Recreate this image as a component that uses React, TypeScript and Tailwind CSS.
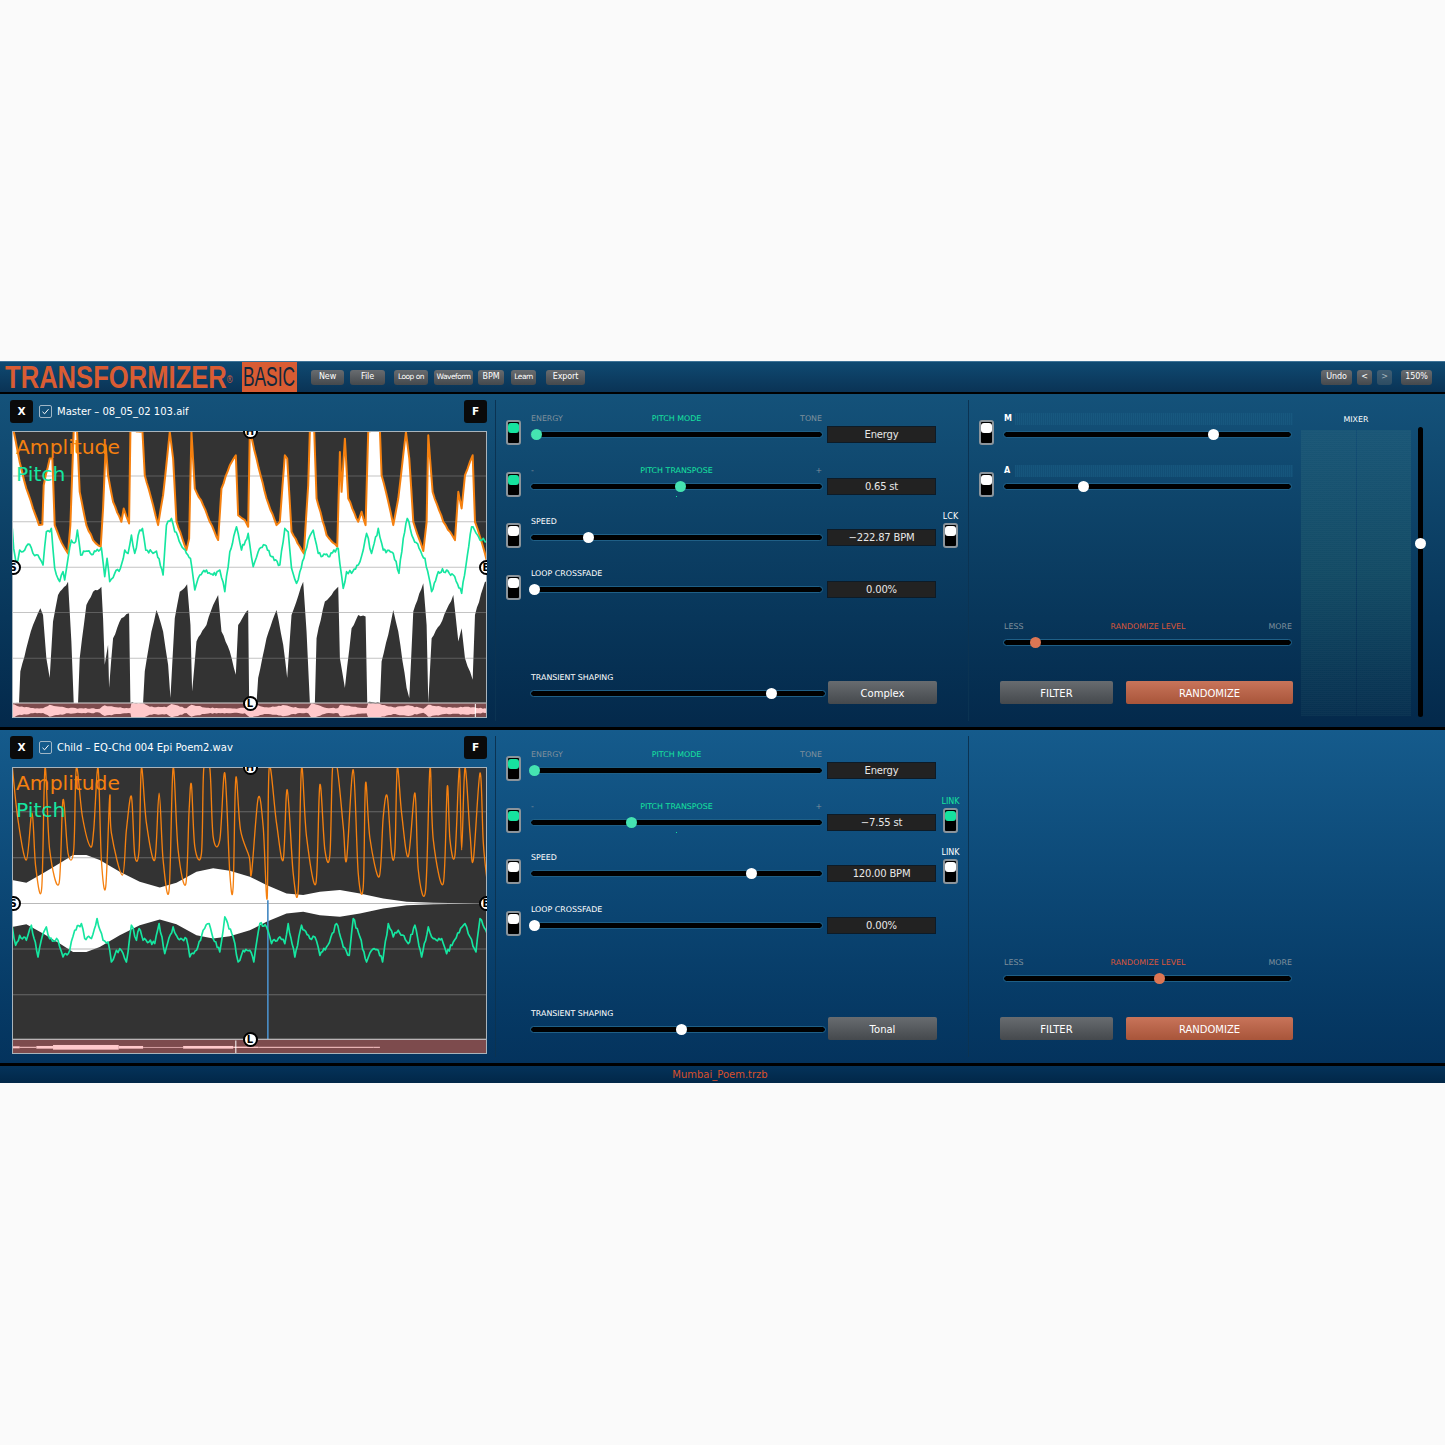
import type { ReactNode } from "react";

type Pt = [number, number];

const toStr = (pts: Pt[]) => pts.map((p) => p.join(",")).join(" ");

// seeded wobble so the traced lines look like real data
function wobble(pts: Pt[], amount: number, step = 5) {
  const out: Pt[] = [];
  let s = 7;
  for (let i = 0; i < pts.length - 1; i++) {
    const [x0, y0] = pts[i];
    const [x1, y1] = pts[i + 1];
    const steps = Math.max(1, Math.floor((x1 - x0) / step));
    for (let k = 0; k < steps; k++) {
      s = (s * 73 + 41) % 1009;
      const t = k / steps;
      const n = k === 0 ? 0 : (s / 1009 - 0.5) * amount;
      out.push([x0 + (x1 - x0) * t, y0 + (y1 - y0) * t + n]);
    }
  }
  out.push(pts[pts.length - 1]);
  return out;
}

// catmull-rom through the points, for the rounded peaks of the child amplitude
function spline(pts: Pt[]) {
  let d = `M${pts[0][0]} ${pts[0][1]}`;
  for (let i = 0; i < pts.length - 1; i++) {
    const p0 = pts[Math.max(0, i - 1)];
    const p1 = pts[i];
    const p2 = pts[i + 1];
    const p3 = pts[Math.min(pts.length - 1, i + 2)];
    d += ` C${p1[0] + (p2[0] - p0[0]) / 6} ${p1[1] + (p2[1] - p0[1]) / 6} ${p2[0] - (p3[0] - p1[0]) / 6} ${p2[1] - (p3[1] - p1[1]) / 6} ${p2[0]} ${p2[1]}`;
  }
  return d;
}

const upperA: Pt[] = wobble([[37,17],[42,17],[60,110],[80,190],[100,250],[118,300],[128,298],[132,180],[150,100],[158,100],[165,300],[180,340],[205,385],[212,300],[222,17],[232,17],[240,200],[260,300],[280,345],[303,365],[310,250],[318,60],[325,150],[340,230],[365,290],[372,250],[388,295],[392,17],[428,17],[435,150],[460,240],[475,300],[490,210],[510,20],[520,100],[530,290],[560,375],[568,340],[575,20],[585,190],[610,240],[630,290],[655,345],[665,190],[690,120],[708,90],[715,270],[735,285],[745,305],[750,17],[770,100],[800,220],[830,300],[840,290],[855,90],[862,100],[875,320],[912,385],[925,180],[930,17],[943,17],[950,220],[980,330],[1012,365],[1020,80],[1025,200],[1035,40],[1045,220],[1075,290],[1085,260],[1097,300],[1105,17],[1140,17],[1145,150],[1165,230],[1180,300],[1195,220],[1218,20],[1228,100],[1240,290],[1270,378],[1280,290],[1285,30],[1298,200],[1330,290],[1365,345],[1375,200],[1385,250],[1395,150],[1418,90],[1425,290],[1440,335],[1461,410]], 6, 6);
const lowerA: Pt[] = wobble([[37,835],[58,835],[62,740],[80,670],[100,600],[122,550],[130,570],[140,700],[150,760],[160,590],[175,510],[205,470],[215,650],[222,835],[235,835],[240,700],[260,540],[280,500],[305,485],[310,580],[315,720],[325,660],[328,790],[340,640],[365,580],[388,565],[392,835],[430,835],[435,740],[455,620],[470,555],[490,620],[505,720],[512,820],[525,580],[540,500],[562,478],[572,600],[577,800],[590,650],[620,600],[640,540],[655,510],[665,620],[690,680],[708,750],[715,600],[745,555],[748,835],[770,835],[775,760],[800,640],[830,555],[850,660],[862,760],[875,570],[910,470],[920,620],[930,835],[945,835],[950,640],[975,530],[1015,485],[1020,700],[1035,790],[1055,610],[1075,570],[1097,575],[1102,835],[1140,835],[1145,710],[1165,630],[1180,555],[1195,620],[1220,790],[1228,820],[1240,560],[1270,475],[1280,600],[1285,835],[1295,640],[1320,600],[1360,510],[1375,650],[1385,610],[1395,700],[1418,765],[1425,570],[1455,470],[1461,470]], 8, 6);
const pitchA: Pt[] = [[38,310],[42,370],[50,420],[60,375],[75,375],[90,358],[100,385],[115,390],[130,420],[140,320],[155,310],[165,430],[180,470],[190,440],[195,465],[205,400],[215,345],[228,350],[233,315],[243,390],[260,378],[280,388],[305,368],[315,455],[322,400],[330,470],[345,445],[362,430],[375,375],[385,385],[395,330],[405,385],[420,315],[428,310],[438,375],[460,385],[470,378],[490,450],[500,300],[515,280],[525,320],[560,385],[572,400],[585,495],[600,450],[620,435],[640,450],[660,435],[675,500],[690,380],[710,305],[725,375],[745,325],[760,425],[775,380],[795,360],[815,395],[840,420],[855,310],[865,320],[875,430],[890,475],[900,440],[912,400],[925,345],[940,315],[955,385],[985,395],[1015,370],[1030,490],[1040,440],[1055,445],[1075,420],[1090,375],[1100,325],[1115,385],[1135,310],[1150,375],[1180,385],[1197,445],[1210,340],[1222,280],[1240,340],[1275,400],[1295,500],[1315,440],[1340,435],[1360,450],[1385,505],[1415,305],[1440,345],[1450,340],[1461,350]];
const miniA: Pt[] = wobble([[37,20],[60,12],[100,8],[130,7],[150,18],[200,8],[240,7],[300,6],[315,16],[350,10],[392,8],[395,22],[430,22],[450,12],[500,10],[515,20],[560,7],[575,18],[620,9],[680,7],[735,8],[750,20],[800,10],[855,16],[900,7],[925,8],[935,22],[980,8],[1015,8],[1020,17],[1060,12],[1100,8],[1105,22],[1140,20],[1180,10],[1225,16],[1270,6],[1285,18],[1340,9],[1400,12],[1430,8],[1461,6]], 3, 6);

const orangeB: Pt[] = [[38,22],[55,180],[80,300],[97,160],[108,320],[126,385],[136,25],[150,270],[178,370],[190,120],[205,280],[222,270],[230,25],[248,170],[272,260],[282,210],[295,25],[305,300],[318,380],[330,110],[335,220],[368,345],[380,210],[395,110],[405,285],[418,270],[425,25],[440,190],[465,300],[478,100],[490,300],[508,390],[520,25],[535,270],[558,372],[568,150],[575,75],[585,260],[605,280],[612,25],[630,25],[640,230],[660,240],[675,40],[690,340],[700,380],[708,55],[722,210],[748,290],[755,340],[775,115],[790,200],[802,415],[808,25],[830,190],[850,300],[862,90],[880,340],[895,390],[905,25],[920,230],[948,370],[960,75],[975,270],[990,285],[998,25],[1012,25],[1030,200],[1040,300],[1060,30],[1075,340],[1090,380],[1097,70],[1110,235],[1138,350],[1150,170],[1162,110],[1175,280],[1185,270],[1192,25],[1205,160],[1225,290],[1245,100],[1255,330],[1277,390],[1290,25],[1300,240],[1330,370],[1342,80],[1350,240],[1365,285],[1378,25],[1385,270],[1395,25],[1410,220],[1420,300],[1440,40],[1450,250],[1461,360]];
const envB: Pt[] = [[37,360],[80,368],[130,340],[180,310],[220,285],[260,285],[300,300],[360,335],[420,365],[480,382],[530,368],[590,335],[640,325],[690,332],[750,350],[800,375],[860,400],[910,405],[960,395],[1020,390],[1080,400],[1150,415],[1220,425],[1300,428],[1440,430]];
const pitchB: Pt[] = [[38,500],[48,555],[60,525],[80,540],[95,495],[115,590],[130,520],[140,500],[150,535],[175,540],[190,590],[210,570],[225,510],[245,490],[255,535],[275,535],[292,475],[310,540],[325,545],[335,605],[350,570],[365,570],[380,605],[395,495],[410,540],[418,505],[430,540],[465,550],[478,490],[495,580],[520,500],[535,535],[560,535],[570,590],[590,570],[610,510],[628,490],[640,535],[660,575],[675,470],[700,530],[715,605],[730,570],[750,570],[762,605],[780,490],[800,500],[815,550],[840,530],[855,550],[865,490],[885,590],[905,495],[930,535],[945,530],[960,585],[980,560],[1010,490],[1030,560],[1048,585],[1060,475],[1080,530],[1100,605],[1115,570],[1135,570],[1148,605],[1165,490],[1180,530],[1195,510],[1225,550],[1245,495],[1265,590],[1285,500],[1300,535],[1325,535],[1340,580],[1360,545],[1395,490],[1410,530],[1428,575],[1440,475],[1461,520]];
const barsB = [[37,60,6],[60,110,3],[110,160,8],[160,357,14],[357,430,8],[430,550,2],[550,700,8],[700,775,4],[775,1120,3],[1120,1140,3]];

function MasterWave() {
  const mini = [...miniA.map(([x, h]): Pt => [x, 858 - h]), ...[...miniA].reverse().map(([x, h]): Pt => [x, 858 + h])];
  return (
    <svg width="475" height="287" viewBox="37 17 1424 863" preserveAspectRatio="none" className="block">
      <rect x="37" y="17" width="1424" height="818" fill="#333333" />
      <polygon points={toStr([...upperA, ...[...lowerA].reverse()])} fill="#ffffff" />
      {[152, 290, 427, 563, 700].map((y) => (
        <line key={y} x1="37" x2="1461" y1={y} y2={y} stroke="#8a8a8a" strokeOpacity="0.5" strokeWidth="3" />
      ))}
      <polyline points={toStr(upperA)} fill="none" stroke="#f5800f" strokeWidth="6" strokeLinejoin="round" />
      <polyline points={toStr(wobble(pitchA, 14, 4))} fill="none" stroke="#15e6a0" strokeWidth="5" strokeLinejoin="round" />
      <rect x="37" y="835" width="1424" height="45" fill="#7d4b4d" />
      <polygon points={toStr(mini)} fill="#ffc9cb" />
      <line x1="1426" x2="1426" y1="838" y2="880" stroke="#ffffff" strokeWidth="3" />
      <line x1="37" x2="1461" y1="835" y2="835" stroke="#d8d8d8" strokeWidth="3" />
    </svg>
  );
}

function ChildWave() {
  const env = [...envB, ...[...envB].reverse().map(([x, y]): Pt => [x, 860 - y])];
  return (
    <svg width="475" height="287" viewBox="37 22 1424 858" preserveAspectRatio="none" className="block">
      <rect x="37" y="22" width="1424" height="814" fill="#333333" />
      <polygon points={toStr(env)} fill="#ffffff" />
      {[156, 293, 430, 566, 703].map((y) => (
        <line key={y} x1="37" x2="1461" y1={y} y2={y} stroke="#8a8a8a" strokeOpacity="0.6" strokeWidth="3" />
      ))}
      <line x1="804" x2="804" y1="420" y2="836" stroke="#4a8cc4" strokeWidth="5" />
      <path d={spline(orangeB)} fill="none" stroke="#f5800f" strokeWidth="4" strokeLinejoin="round" />
      <polyline points={toStr(wobble(pitchB, 14, 4))} fill="none" stroke="#15e6a0" strokeWidth="5" strokeLinejoin="round" />
      <rect x="37" y="836" width="1424" height="44" fill="#7d4b4d" />
      {barsB.map(([a, b, h]) => (
        <rect key={a} x={a} y={860 - h / 2} width={b - a} height={h} fill="#ffc9cb" />
      ))}
      <line x1="708" x2="708" y1="840" y2="880" stroke="#ffffff" strokeWidth="3" />
      <line x1="37" x2="1461" y1="836" y2="836" stroke="#d8d8d8" strokeWidth="3" />
    </svg>
  );
}

function Handle({ label, className }: { label: string; className: string }) {
  return (
    <div className={`absolute flex h-[15px] w-[15px] items-center justify-center rounded-full border-2 border-black bg-white text-[10px] font-bold text-black ${className}`}>
      {label}
    </div>
  );
}

function Plot({ children }: { children: ReactNode }) {
  return (
    <div className="relative ml-[12px] mt-[8px] h-[287px] w-[475px] overflow-hidden outline outline-1 -outline-offset-1 outline-[#a9b4bc]">
      {children}
      <div className="absolute left-[4px] top-[3px] text-[20.3px] leading-[26px] text-[#f5800f]">Amplitude</div>
      <div className="absolute left-[4px] top-[30px] text-[20.3px] leading-[26px] text-[#15e6a0]">Pitch</div>
      <Handle label="H" className="left-[230.5px] top-[-7.5px]" />
      <Handle label="S" className="left-[-6.5px] top-[128.5px]" />
      <Handle label="E" className="left-[466.5px] top-[128.5px]" />
      <Handle label="L" className="left-[230.5px] top-[264.5px]" />
    </div>
  );
}

function Toggle({ on }: { on?: boolean }) {
  return (
    <div className="h-[25px] w-[15px] shrink-0 rounded-[3px] border-2 border-[#8b949b] bg-black">
      <div className={`mx-auto mt-[1px] h-[10px] w-[11px] rounded-[3px] ${on ? "bg-[#16e39f]" : "bg-white"}`} />
    </div>
  );
}

type Tone = "white" | "green" | "orange";

function Slider({ at, width, tone = "white" }: { at: number; width: number; tone?: Tone }) {
  const thumb = tone === "green" ? "bg-[#45e3b1]" : tone === "orange" ? "bg-[#dc7654]" : "bg-white";
  return (
    <div className="relative flex h-[11px] items-center" style={{ width }}>
      <div className="h-[5px] w-full rounded-full bg-black outline outline-1 outline-[#1f5f86]" />
      <div className={`absolute top-0 h-[11px] w-[11px] rounded-full ${thumb}`} style={{ left: at - 5.5 }} />
    </div>
  );
}

function Value({ children }: { children: ReactNode }) {
  return (
    <div className="mt-[13px] flex h-[17px] w-[109px] items-center justify-center border border-[#0d1b27] bg-[#222222] text-[10px] tracking-[-0.2px] text-[#e8e8e8]">
      {children}
    </div>
  );
}

function LinkSwitch({ label, on, tone }: { label: string; on?: boolean; tone: string }) {
  return (
    <div className="-mt-[4px] ml-[7px] flex w-[15px] flex-col items-center">
      <div className={`mb-[1px] h-[10px] text-[8px] leading-[10px] ${tone}`}>{label}</div>
      <Toggle on={on} />
    </div>
  );
}

type RowProps = {
  on?: boolean;
  label: ReactNode;
  at: number;
  tone?: Tone;
  value: string;
  tick?: boolean;
  side?: ReactNode;
};

function Row({ on, label, at, tone, value, tick, side }: RowProps) {
  return (
    <div className="flex h-[51.6px] items-start">
      <div className="mt-[7px]">
        <Toggle on={on} />
      </div>
      <div className="relative ml-[10px] w-[291px]">
        <div className="mb-[5px] h-[11px] text-[7.9px] leading-[11px]">{label}</div>
        <Slider at={at} width={291} tone={tone} />
        {tick && <div className="absolute left-[145px] top-[31px] h-[1px] w-[1px] bg-[#16e39f]" />}
      </div>
      <div className="ml-[5px]">
        <Value>{value}</Value>
      </div>
      {side}
    </div>
  );
}

function TriLabel({ left, mid, right, tone }: { left: string; mid: string; right: string; tone: string }) {
  return (
    <div className="grid grid-cols-[1fr_auto_1fr]">
      <span className="text-[#7f8f9c]">{left}</span>
      <span className={tone}>{mid}</span>
      <span className="text-right text-[#7f8f9c]">{right}</span>
    </div>
  );
}

function Divider() {
  return <div className="my-[6px] w-[1px] bg-[#0b3352]" />;
}

function TallButton({ children, className }: { children: ReactNode; className: string }) {
  return (
    <div className={`flex h-[23px] items-center justify-center rounded-[2px] pt-[1px] text-[10px] text-white ${className}`}>
      {children}
    </div>
  );
}

function RandomizeBlock({ at }: { at: number }) {
  return (
    <div className="mt-auto">
      <div className="ml-[35px] w-[288px]">
        <div className="mb-[5px] h-[11px] text-[7.9px] leading-[11px]">
          <TriLabel left="LESS" mid="RANDOMIZE LEVEL" right="MORE" tone="text-[#d9553a]" />
        </div>
        <Slider at={at} width={287} tone="orange" />
      </div>
      <div className="ml-[31px] mt-[33px] flex gap-[13px]">
        <TallButton className="w-[113px] bg-linear-to-b from-[#686c70] to-[#45494d]">FILTER</TallButton>
        <TallButton className="w-[167px] bg-linear-to-b from-[#c8745a] to-[#a8553a]">RANDOMIZE</TallButton>
      </div>
    </div>
  );
}

function MeterRow({ name, at }: { name: string; at: number }) {
  return (
    <div className="flex h-[51.6px] items-start">
      <div className="mt-[7px]">
        <Toggle />
      </div>
      <div className="ml-[10px]">
        <div className="mb-[4px] flex h-[12px] items-center">
          <span className="w-[11px] text-[8px] font-bold text-white">{name}</span>
          <div className="h-[12px] w-[278px] bg-[repeating-linear-gradient(90deg,#1a5e85_0_1px,#15537a_1px_2px)] opacity-60" />
        </div>
        <Slider at={at} width={287} />
      </div>
    </div>
  );
}

function Mixer() {
  return (
    <>
      <div className="ml-[8px] flex w-[110px] flex-col pb-[11px] pt-[21px]">
        <div className="mb-[5px] h-[10px] text-center text-[7.9px] leading-[10px] text-white">MIXER</div>
        <div className="grid flex-1 grid-cols-2 gap-[1px] bg-[repeating-linear-gradient(0deg,#ffffff05_0_1px,transparent_1px_2px)]">
          <div className="bg-linear-to-b from-[#2f6f7c44] via-[#2f7a7440] to-[#2a6a7018]" />
          <div className="bg-linear-to-b from-[#2f6f7c44] via-[#2f7a7440] to-[#2a6a7018]" />
        </div>
      </div>
      <div className="relative ml-[4px] mt-[33px] flex h-[290px] w-[11px] justify-center">
        <div className="h-full w-[5px] rounded-full bg-black" />
        <div className="absolute left-0 top-[111px] h-[11px] w-[11px] rounded-full bg-white" />
      </div>
    </>
  );
}

type PanelProps = {
  name: string;
  wave: ReactNode;
  rows: RowProps[];
  shapeAt: number;
  shape: string;
  level: number;
  tall?: boolean;
  light?: boolean;
};

function Panel({ name, wave, rows, shapeAt, shape, level, tall, light }: PanelProps) {
  return (
    <div className={`flex h-[333px] bg-linear-to-b ${light ? "from-[#155b8c] to-[#04335d]" : "from-[#14527a] to-[#04294b]"}`}>
      <div className="w-[495px] shrink-0 pt-[6px]">
        <div className="flex h-[23px] items-center pl-[10px] pr-[8px]">
          <div className="flex h-[23px] w-[23px] items-center justify-center rounded-[3px] bg-[#0a0a0a] text-[10.5px] font-bold text-white">X</div>
          <div className="ml-[6px] flex h-[13px] w-[13px] items-center justify-center rounded-[2px] border border-[#9fb6c6]">
            <svg width="9" height="9" viewBox="0 0 9 9">
              <path d="M1.5 4.8 L3.6 6.8 L7.5 2.2" fill="none" stroke="white" strokeWidth="1" />
            </svg>
          </div>
          <span className="ml-[5px] text-[10px] text-white">{name}</span>
          <div className="ml-auto flex h-[23px] w-[23px] items-center justify-center rounded-[3px] bg-[#0a0a0a] text-[10.5px] font-bold text-white">F</div>
        </div>
        <Plot>{wave}</Plot>
      </div>
      <Divider />
      <div className="flex w-[472px] shrink-0 flex-col pb-[23px] pl-[10px] pt-[19px]">
        {rows.map((r, i) => (
          <Row key={i} {...r} />
        ))}
        <div className="mt-auto flex items-end">
          <div className="ml-[25px] w-[294px]">
            <div className="mb-[5px] h-[11px] text-[7.9px] leading-[11px] text-white">TRANSIENT SHAPING</div>
            <div className="mb-[5.5px]">
              <Slider at={shapeAt} width={294} />
            </div>
          </div>
          <TallButton className="ml-[3px] w-[109px] bg-linear-to-b from-[#686c70] to-[#45494d]">{shape}</TallButton>
        </div>
      </div>
      <Divider />
      <div className="flex flex-1">
        <div className="flex w-[324px] shrink-0 flex-col pb-[23px] pt-[19px]">
          {tall && (
            <div className="pl-[10px]">
              <MeterRow name="M" at={209} />
              <MeterRow name="A" at={79} />
            </div>
          )}
          <RandomizeBlock at={level} />
        </div>
        {tall && <Mixer />}
      </div>
    </div>
  );
}

function ToolButton({ w, children, dim, tight }: { w: string; children: ReactNode; dim?: boolean; tight?: boolean }) {
  return (
    <div className={`flex h-[15px] items-center justify-center rounded-[3px] bg-linear-to-b ${tight ? "text-[7.5px] tracking-[-0.5px]" : "text-[8px] tracking-[-0.1px]"} ${w} ${dim ? "from-[#3f5f75] to-[#2d4c62] text-[#a9b6bf]" : "from-[#686c70] to-[#45494d] text-white"}`}>
      {children}
    </div>
  );
}

const masterRows: RowProps[] = [
  { on: true, at: 5, tone: "green", value: "Energy", label: <TriLabel left="ENERGY" mid="PITCH MODE" right="TONE" tone="text-[#16e39f]" /> },
  { on: true, at: 149, tone: "green", value: "0.65 st", tick: true, label: <TriLabel left="-" mid="PITCH TRANSPOSE" right="+" tone="text-[#16e39f]" /> },
  { at: 57, value: "−222.87 BPM", label: <span className="text-white">SPEED</span>, side: <LinkSwitch label="LCK" tone="text-white" /> },
  { at: 3, value: "0.00%", label: <span className="text-white">LOOP CROSSFADE</span> },
];

const childRows: RowProps[] = [
  { on: true, at: 3, tone: "green", value: "Energy", label: <TriLabel left="ENERGY" mid="PITCH MODE" right="TONE" tone="text-[#16e39f]" /> },
  { on: true, at: 100, tone: "green", value: "−7.55 st", tick: true, label: <TriLabel left="-" mid="PITCH TRANSPOSE" right="+" tone="text-[#16e39f]" />, side: <LinkSwitch label="LINK" on tone="text-[#16e39f]" /> },
  { at: 220, value: "120.00 BPM", label: <span className="text-white">SPEED</span>, side: <LinkSwitch label="LINK" tone="text-white" /> },
  { at: 3, value: "0.00%", label: <span className="text-white">LOOP CROSSFADE</span> },
];

export default function App() {
  return (
    <div className="min-h-[1445px] bg-[#fafafa] pt-[361px] font-['DejaVu_Sans',sans-serif]">
      <div className="flex h-[31px] items-center border-t border-[#3f7397] bg-linear-to-b from-[#0f4a72] to-[#0a3355]">
        <div className="h-[30px] w-[242px] shrink-0 pl-[5px]">
          <span className="inline-block origin-left scale-x-[0.8] whitespace-nowrap font-['Liberation_Sans',sans-serif] text-[32px] font-bold leading-[30px] text-[#d95c33]">
            TRANSFORMIZER<sup className="text-[10px] font-normal">®</sup>
          </span>
        </div>
        <div className="flex h-[30px] w-[55px] shrink-0 items-center justify-center bg-[#d95c33] font-['Liberation_Sans',sans-serif] text-[28px] leading-none text-[#10283d]">
          <span className="inline-block scale-x-[0.62]">BASIC</span>
        </div>
        <div className="ml-[14px] flex">
          <ToolButton w="w-[33px]">New</ToolButton>
          <div className="ml-[6px]"><ToolButton w="w-[35px]">File</ToolButton></div>
          <div className="ml-[9px]"><ToolButton w="w-[34px]" tight>Loop on</ToolButton></div>
          <div className="ml-[6px]"><ToolButton w="w-[39px]" tight>Waveform</ToolButton></div>
          <div className="ml-[5px]"><ToolButton w="w-[26px]">BPM</ToolButton></div>
          <div className="ml-[7px]"><ToolButton w="w-[25px]" tight>Learn</ToolButton></div>
          <div className="ml-[10px]"><ToolButton w="w-[39px]">Export</ToolButton></div>
        </div>
        <div className="ml-auto mr-[13px] flex">
          <ToolButton w="w-[31px]">Undo</ToolButton>
          <div className="ml-[5px]"><ToolButton w="w-[15px]">&lt;</ToolButton></div>
          <div className="ml-[5px]"><ToolButton w="w-[15px]" dim>&gt;</ToolButton></div>
          <div className="ml-[9px]"><ToolButton w="w-[31px]">150%</ToolButton></div>
        </div>
      </div>
      <div className="h-[2px] bg-black" />
      <Panel name="Master – 08_05_02 103.aif" wave={<MasterWave />} rows={masterRows} shapeAt={240} shape="Complex" level={31} tall />
      <div className="h-[3px] bg-black" />
      <Panel name="Child – EQ-Chd 004 Epi Poem2.wav" wave={<ChildWave />} rows={childRows} shapeAt={150} shape="Tonal" level={155} light />
      <div className="h-[3px] bg-black" />
      <div className="flex h-[17px] items-center justify-center bg-linear-to-b from-[#05335a] to-[#022748] pb-[1px] pr-[5px] text-[10px] text-[#d9502c]">
        Mumbai_Poem.trzb
      </div>
    </div>
  );
}
